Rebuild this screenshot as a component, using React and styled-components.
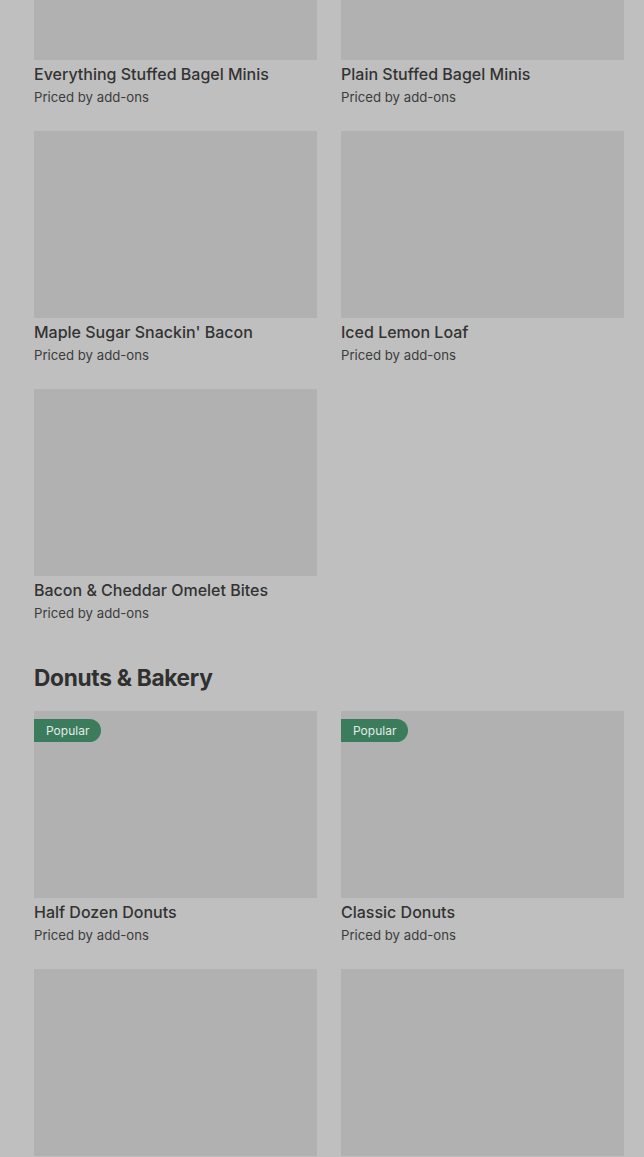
import React from "react";
import styled, { createGlobalStyle } from "styled-components";

const Global = createGlobalStyle`
  html, body { margin: 0; padding: 0; background: #bfbfbf; overflow: hidden; }
  body { font-family: Inter, "Noto Sans", sans-serif; color: #333333; }
`;

const Page = styled.div`
  padding: 0 20px 0 34px;
  margin-top: -127px;
`;

const Section = styled.section`
  display: flex;
  flex-direction: column;
`;

const Heading = styled.h2`
  margin: 39px 0 17px;
  font-size: 22.7px;
  line-height: 32px;
  font-weight: 700;
  letter-spacing: -0.3px;
  color: #303030;
`;

const Grid = styled.div`
  display: grid;
  grid-template-columns: 283px 283px;
  column-gap: 24px;
  row-gap: 24px;
`;

const Card = styled.div`
  display: flex;
  flex-direction: column;
`;

const Thumb = styled.div`
  position: relative;
  height: 187px;
  background: #b1b1b1;
`;

const Badge = styled.span`
  position: absolute;
  top: 8px;
  left: 0;
  height: 23px;
  padding: 0 12px;
  display: flex;
  align-items: center;
  background: #3b7c5d;
  color: #e2ebe6;
  font-size: 12px;
  border-radius: 0 12px 12px 0;
`;

const Title = styled.div`
  margin-top: 2px;
  font-size: 16px;
  line-height: 24px;
  font-weight: 500;
  color: #333333;
`;

const Sub = styled.div`
  margin-top: 1px;
  font-size: 13.2px;
  line-height: 20px;
  color: #3c3c3c;
`;

const first = [
  "Everything Stuffed Bagel Minis",
  "Plain Stuffed Bagel Minis",
  "Maple Sugar Snackin' Bacon",
  "Iced Lemon Loaf",
  "Bacon & Cheddar Omelet Bites",
];

const donuts = [
  { name: "Half Dozen Donuts", popular: true },
  { name: "Classic Donuts", popular: true },
  { name: "", popular: false },
  { name: "", popular: false },
];

function Item({ name, popular }) {
  return (
    <Card>
      <Thumb>{popular && <Badge>Popular</Badge>}</Thumb>
      {name && <Title>{name}</Title>}
      {name && <Sub>Priced by add-ons</Sub>}
    </Card>
  );
}

export default function App() {
  return (
    <>
      <Global />
      <Page>
        <Section>
          <Grid>
            {first.map((n) => (
              <Item key={n} name={n} />
            ))}
          </Grid>
        </Section>
        <Section>
          <Heading>Donuts &amp; Bakery</Heading>
          <Grid>
            {donuts.map((d, i) => (
              <Item key={i} name={d.name} popular={d.popular} />
            ))}
          </Grid>
        </Section>
      </Page>
    </>
  );
}
